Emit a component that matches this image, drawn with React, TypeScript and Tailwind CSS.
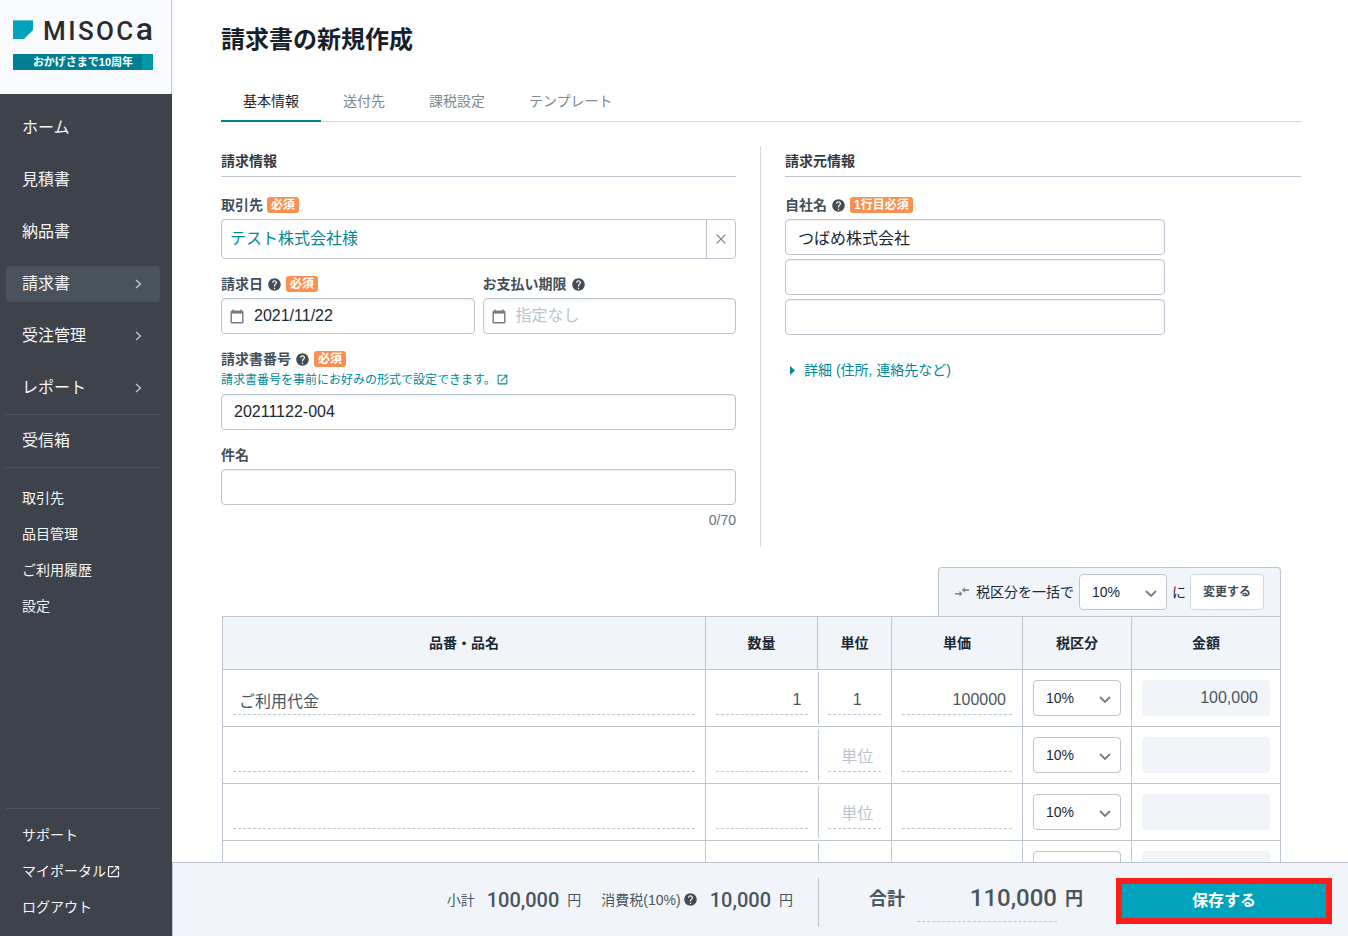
import { useState } from "react";
import type { ReactNode } from "react";
import { clsx } from "clsx";
import { MdHelp, MdOpenInNew } from "react-icons/md";

type NavItem = {
  label: string;
  active?: boolean;
  expandable?: boolean;
  external?: boolean;
};

const mainNav: NavItem[] = [
  { label: "ホーム" },
  { label: "見積書" },
  { label: "納品書" },
  { label: "請求書", active: true, expandable: true },
  { label: "受注管理", expandable: true },
  { label: "レポート", expandable: true },
];

const subNav: NavItem[] = [
  { label: "取引先" },
  { label: "品目管理" },
  { label: "ご利用履歴" },
  { label: "設定" },
];

const footerNav: NavItem[] = [
  { label: "サポート" },
  { label: "マイポータル", external: true },
  { label: "ログアウト" },
];

const tabs = ["基本情報", "送付先", "課税設定", "テンプレート"];

const rows = [
  { name: "ご利用代金", quantity: "1", unit: "1", price: "100000", amount: "100,000" },
  { name: "", quantity: "", unit: "", price: "", amount: "" },
  { name: "", quantity: "", unit: "", price: "", amount: "" },
  { name: "", quantity: "", unit: "", price: "", amount: "" },
  { name: "", quantity: "", unit: "", price: "", amount: "" },
];

const inputClass =
  "h-9 w-full rounded border border-[#bcc5d0] bg-white px-3 text-base text-[#1a2833] shadow-[inset_0_1px_2px_rgba(0,0,0,0.08)] outline-none";

const cellInputClass =
  "block h-[34px] w-full border-b border-dashed border-[#bcc5d0] bg-transparent px-1.5 pt-1 text-base text-[#4b5560] outline-none placeholder:text-[#b9c4ce]";

const Logo = () => (
  <a href="#" aria-label="Misoca" className="flex items-end gap-2.5">
    <svg width="20" height="19" viewBox="0 0 20 19">
      <path d="M0 0h20v10l-9 9H0z" fill="#00a3bb" />
      <path d="M0 0h20v1H0z" fill="#5cc3cf" />
    </svg>
    <span className="flex h-[19px] flex-1 items-baseline justify-between font-[Roboto,sans-serif] text-[26px] leading-[18px] font-medium text-[#2c2c2c]">
      <span>M</span>
      <span>I</span>
      <span>S</span>
      <span>O</span>
      <span>C</span>
      <span className="text-[32px] leading-[18px]">a</span>
    </span>
  </a>
);

const Chevron = () => (
  <svg width="7" height="10" viewBox="0 0 7 10" fill="none">
    <path d="M1 1l4.5 4L1 9" stroke="#c3c8cd" strokeWidth="1.3" />
  </svg>
);

const NavList = ({ items, small = false }: { items: NavItem[]; small?: boolean }) => (
  <ul className={clsx("flex flex-col", !small && "gap-4")}>
    {items.map((item) => (
      <li key={item.label}>
        <a
          href="#"
          className={clsx(
            "flex h-9 items-center rounded px-4 text-[#f4f5f6]",
            small ? "text-sm" : "text-base",
            item.active && "bg-[#4a535b]",
          )}
        >
          {item.label}
          {item.external && <MdOpenInNew size={15} />}
          {item.expandable && (
            <span className="ml-auto pr-0.5">
              <Chevron />
            </span>
          )}
        </a>
      </li>
    ))}
  </ul>
);

const Sidebar = () => (
  <aside className="flex w-[172px] shrink-0 flex-col bg-[#3e424b]">
    <div className="h-[94px] border-r border-[#bcc5d0] bg-[#f9fbff] pt-5 pr-[18px] pl-[13px]">
      <Logo />
      <p className="mt-[15px] border-r-[11px] border-[#0097a8] bg-[#007f92] pl-[11px] text-center text-[11px] leading-4 font-bold text-white">
        おかげさまで10周年
      </p>
    </div>
    <nav className="flex flex-1 flex-col pt-4 pr-3 pb-[11px] pl-1.5">
      <NavList items={mainNav} />
      <hr className="my-2 border-[#50555e]" />
      <NavList items={[{ label: "受信箱" }]} />
      <hr className="mt-2 mb-3 border-[#50555e]" />
      <NavList items={subNav} small />
      <hr className="mt-auto mb-2 border-[#50555e]" />
      <NavList items={footerNav} small />
    </nav>
  </aside>
);

const Badge = ({ children }: { children: ReactNode }) => (
  <span className="rounded-[3px] bg-[#f8904f] px-1 text-xs leading-4 font-bold text-white">
    {children}
  </span>
);

const Help = () => (
  <button type="button" aria-label="ヘルプ" className="text-[#444c54]">
    <MdHelp size={15} />
  </button>
);

type FieldLabelProps = {
  htmlFor: string;
  text: string;
  help?: boolean;
  badge?: string;
};

const FieldLabel = ({ htmlFor, text, help = false, badge }: FieldLabelProps) => (
  <div className="mb-1 flex h-5 items-center gap-1">
    <label htmlFor={htmlFor} className="text-sm leading-5 font-bold text-[#444f58]">
      {text}
    </label>
    {help && <Help />}
    {badge && <Badge>{badge}</Badge>}
  </div>
);

const SectionTitle = ({ children }: { children: ReactNode }) => (
  <h2 className="mb-[18px] border-b border-[#bcc5d0] py-[5px] text-sm leading-5 font-bold text-[#323a42]">
    {children}
  </h2>
);

const CalendarIcon = () => (
  <svg width="14" height="15" viewBox="0 0 14 15" className="shrink-0">
    <path d="M3 0.5v2M11 0.5v2" stroke="#757c82" strokeWidth="1.4" />
    <rect
      x="1.2"
      y="2.2"
      width="11.6"
      height="11.6"
      rx="0.8"
      fill="none"
      stroke="#757c82"
      strokeWidth="1.4"
    />
    <path d="M1 2h12v2.6H1z" fill="#757c82" />
  </svg>
);

type DateFieldProps = { id: string; value?: string; placeholder?: string };

const DateField = ({ id, value, placeholder }: DateFieldProps) => (
  <div className="flex h-9 items-center gap-2.5 rounded border border-[#bcc5d0] px-2 shadow-[inset_0_1px_2px_rgba(0,0,0,0.08)]">
    <CalendarIcon />
    <input
      id={id}
      type="text"
      defaultValue={value}
      placeholder={placeholder}
      className="w-full min-w-0 bg-transparent text-base text-[#1a2833] outline-none placeholder:text-[#b9c4ce]"
    />
  </div>
);

const TaxSelect = ({ label }: { label: string }) => (
  <div className="relative w-[88px]">
    <select
      aria-label={label}
      defaultValue="10"
      className="block h-9 w-full appearance-none rounded border border-[#bcc5d0] bg-white px-3 text-sm text-[#1a2833]"
    >
      <option value="10">10%</option>
      <option value="8">8%</option>
      <option value="0">0%</option>
    </select>
    <svg
      width="12"
      height="8"
      viewBox="0 0 12 8"
      fill="none"
      className="pointer-events-none absolute top-4 right-2.5"
    >
      <path d="M1 1l5 5 5-5" stroke="#747c83" strokeWidth="1.8" />
    </svg>
  </div>
);

const BillingInfo = () => (
  <section className="border-r border-[#d0d9e2] pr-6 pb-[17px]">
    <SectionTitle>請求情報</SectionTitle>
    <div className="flex flex-col gap-[15px]">
      <div>
        <FieldLabel htmlFor="customer" text="取引先" badge="必須" />
        <div className="flex h-10 rounded border border-[#bcc5d0]">
          <button id="customer" type="button" className="flex-1 px-2 text-left text-base text-[#008899]">
            テスト株式会社様
          </button>
          <button
            type="button"
            aria-label="取引先を解除"
            className="flex w-[29px] items-center justify-center border-l border-[#bcc5d0]"
          >
            <svg width="10" height="10" viewBox="0 0 10 10">
              <path d="M0.7 0.7l8.6 8.6M9.3 0.7l-8.6 8.6" stroke="#747c83" strokeWidth="1.2" />
            </svg>
          </button>
        </div>
      </div>
      <div className="grid grid-cols-2 gap-2">
        <div>
          <FieldLabel htmlFor="issue-date" text="請求日" help badge="必須" />
          <DateField id="issue-date" value="2021/11/22" />
        </div>
        <div>
          <FieldLabel htmlFor="due-date" text="お支払い期限" help />
          <DateField id="due-date" placeholder="指定なし" />
        </div>
      </div>
      <div>
        <FieldLabel htmlFor="invoice-number" text="請求書番号" help badge="必須" />
        <a href="#" className="-mt-1 mb-1 flex h-[21px] items-center text-xs text-[#008899]">
          請求書番号を事前にお好みの形式で設定できます。
          <MdOpenInNew size={13} />
        </a>
        <input id="invoice-number" type="text" defaultValue="20211122-004" className={inputClass} />
      </div>
      <div>
        <FieldLabel htmlFor="subject" text="件名" />
        <input id="subject" type="text" className={inputClass} />
        <p className="mt-[5px] text-right text-sm leading-5 text-[#6b7379]">0/70</p>
      </div>
    </div>
  </section>
);

const SenderInfo = () => (
  <section className="pl-6">
    <SectionTitle>請求元情報</SectionTitle>
    <FieldLabel htmlFor="company-1" text="自社名" help badge="1行目必須" />
    <div className="flex max-w-[380px] flex-col gap-1">
      <input id="company-1" type="text" defaultValue="つばめ株式会社" className={inputClass} />
      <input type="text" aria-label="自社名 2行目" className={inputClass} />
      <input type="text" aria-label="自社名 3行目" className={inputClass} />
    </div>
    <button type="button" className="mt-[25px] flex items-center gap-[9px] pl-[5px] text-sm leading-5 text-[#008899]">
      <svg width="5" height="9" viewBox="0 0 5 9">
        <path d="M0 0l5 4.5L0 9z" fill="currentColor" />
      </svg>
      詳細 (住所, 連絡先など)
    </button>
  </section>
);

const TaxBatchBar = () => (
  <div className="flex items-center rounded-t border border-b-0 border-[#bcc5d0] bg-[#f1f5f9] px-4 py-1.5 text-sm text-[#1a2833]">
    <svg width="14" height="10" viewBox="0 0 14 10" className="mr-[7px]">
      <path
        d="M0 6h4.5V4L7.500 6.800 4.500 9.600V7.600H0zM14 2.300H10V.2L6.800 3l3.200 2.800V3.900h4z"
        fill="#80888e"
      />
    </svg>
    税区分を一括で
    <span className="mx-[5px]">
      <TaxSelect label="一括変更する税区分" />
    </span>
    に
    <button
      type="button"
      className="ml-1 h-9 rounded border border-[#d0d9e2] bg-white px-3 text-xs font-bold text-[#444c54]"
    >
      変更する
    </button>
  </div>
);

const thClass = "h-[53px] border border-[#bcc5d0] p-0 text-center font-bold";
const tdClass = "h-[57px] border border-[#bcc5d0] px-2.5 py-0";
// the line between quantity and unit stops short of the row lines
const unitTdClass =
  "relative border-l-0 before:absolute before:top-0.5 before:bottom-0.5 before:left-0 before:w-px before:bg-[#bcc5d0]";

const ItemsTable = () => (
  <table className="w-full table-fixed border-collapse">
    <thead className="bg-[#f1f5f9] text-sm text-[#1a2833]">
      <tr>
        <th className={thClass}>品番・品名</th>
        <th className={clsx(thClass, "w-[112px]")}>数量</th>
        <th className={clsx(thClass, "w-[74px]")}>単位</th>
        <th className={clsx(thClass, "w-[131px]")}>単価</th>
        <th className={clsx(thClass, "w-[109px]")}>税区分</th>
        <th className={clsx(thClass, "w-[149px]")}>金額</th>
      </tr>
    </thead>
    <tbody>
      {rows.map((row, index) => (
        <tr key={index}>
          <td className={tdClass}>
            <input aria-label="品番・品名" defaultValue={row.name} className={cellInputClass} />
          </td>
          <td className={clsx(tdClass, "border-r-0")}>
            <input aria-label="数量" defaultValue={row.quantity} className={clsx(cellInputClass, "text-right")} />
          </td>
          <td className={clsx(tdClass, unitTdClass)}>
            <input
              aria-label="単位"
              defaultValue={row.unit}
              placeholder="単位"
              className={clsx(cellInputClass, "pl-3 text-center")}
            />
          </td>
          <td className={tdClass}>
            <input aria-label="単価" defaultValue={row.price} className={clsx(cellInputClass, "text-right")} />
          </td>
          <td className={tdClass}>
            <TaxSelect label="税区分" />
          </td>
          <td className={tdClass}>
            <output className="block h-9 rounded bg-[#f1f5f9] px-3 text-right text-base leading-9 text-[#4b5560]">
              {row.amount}
            </output>
          </td>
        </tr>
      ))}
    </tbody>
  </table>
);

const TotalBar = () => (
  <footer className="flex h-[74px] shrink-0 items-center justify-end border-t border-l border-[#bcc5d0] bg-[#f1f5f9] pr-4 text-[#4b5560]">
    <div className="flex items-center text-sm">
      <span>小計</span>
      <span className="mr-2 ml-3 font-[Roboto,sans-serif] text-xl font-medium">100,000</span>
      <span>円</span>
      <span className="mr-0.5 ml-5">消費税(10%)</span>
      <Help />
      <span className="mr-2 ml-3 font-[Roboto,sans-serif] text-xl font-medium">10,000</span>
      <span>円</span>
    </div>
    <div className="mb-[9px] ml-[25px] flex h-[49px] items-center self-end border-l border-[#bcc5d0] pb-2 pl-[50px] text-lg font-bold">
      <label htmlFor="total">合計</label>
      <input
        id="total"
        readOnly
        value="110,000"
        className="mr-2 ml-3 h-[47px] w-[140px] border-b border-dashed border-[#bcc5d0] bg-transparent text-right font-[Roboto,sans-serif] text-2xl font-medium outline-none"
      />
      <span>円</span>
    </div>
    <button
      type="button"
      className="mt-0.5 ml-[33px] h-[46px] w-[216px] border-6 border-[#fe1c1c] bg-[#00a3bb] text-base font-bold text-white"
    >
      保存する
    </button>
  </footer>
);

const App = () => {
  const [activeTab, setActiveTab] = useState(tabs[0]);

  return (
    <div className="flex h-screen bg-white font-['Liberation_Sans','Noto_Sans_CJK_JP',sans-serif] text-[#1a2833]">
      <Sidebar />
      <div className="flex min-w-0 flex-1 flex-col">
        <main className="min-h-0 flex-1 overflow-y-auto pt-6 pr-[47px] pl-[49px] [scrollbar-width:none]">
          <h1 className="text-2xl leading-8 font-bold text-[#15202b]">請求書の新規作成</h1>
          <div role="tablist" className="mt-[25px] flex h-[41px] border-b border-[#d0d9e2]">
            {tabs.map((tab) => (
              <button
                key={tab}
                type="button"
                role="tab"
                aria-selected={tab === activeTab}
                onClick={() => setActiveTab(tab)}
                className={clsx(
                  "-mb-px border-b-2 px-[22px] text-sm",
                  tab === activeTab
                    ? "border-[#008294] text-[#1a2833]"
                    : "border-transparent text-[#80888e]",
                )}
              >
                {tab}
              </button>
            ))}
          </div>
          <div className="mt-6 grid grid-cols-2">
            <BillingInfo />
            <SenderInfo />
          </div>
          <div className="mt-5 mr-5 ml-px">
            <div className="flex justify-end">
              <TaxBatchBar />
            </div>
            <ItemsTable />
          </div>
        </main>
        <TotalBar />
      </div>
    </div>
  );
};

export default App;
